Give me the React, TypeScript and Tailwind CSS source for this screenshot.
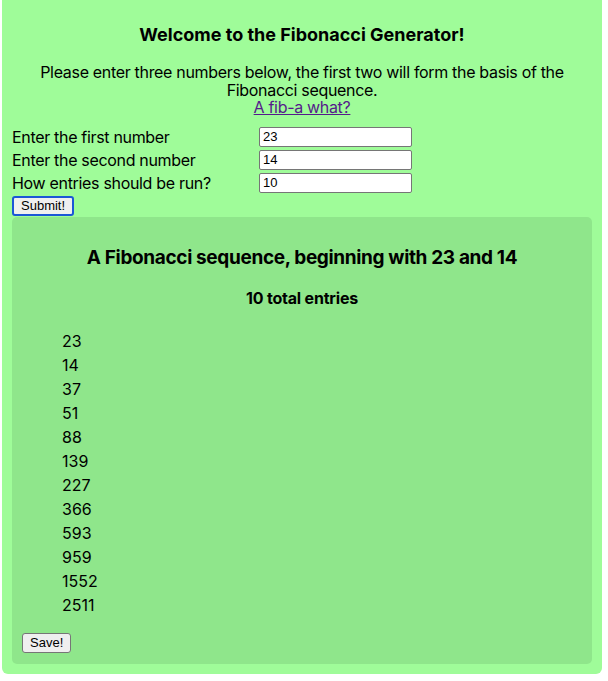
import React from "react";

const entries = [23, 14, 37, 51, 88, 139, 227, 366, 593, 959, 1552, 2511];

export default function App() {
  return (
    <div className="min-h-[681px] bg-white" style={{ fontFamily: "Inter, 'Noto Sans', sans-serif" }}>
      <div className="ml-[2px] w-[600px] rounded-b-[6px] bg-[#9ffc99] px-[10px] pb-[10px] pt-[24px] text-black">
        <h1 className="text-center text-[18px] font-bold leading-[22px]">Welcome to the Fibonacci Generator!</h1>
        <div className="mt-[18px] text-center text-[16px] leading-[17.5px] tracking-[-0.32px]">
          <p>Please enter three numbers below, the first two will form the basis of the Fibonacci sequence.</p>
          <a href="#" className="text-[#551a8b] underline">A fib-a what?</a>
        </div>
        <form className="mt-[10px] flex flex-col gap-[3px]" onSubmit={(e) => e.preventDefault()}>
          {[
            ["Enter the first number", "23"],
            ["Enter the second number", "14"],
            ["How entries should be run?", "10"],
          ].map(([label, val]) => (
            <div key={label} className="flex h-[20px] items-center">
              <label className="w-[247px] text-[16px] leading-[20px] tracking-[-0.32px]">{label}</label>
              <input
                readOnly
                value={val}
                className="h-[20px] w-[153px] rounded-[2px] border border-[#767676] bg-white px-[3px] text-[13px] leading-[18px] outline-none"
                style={{ fontFamily: "'Liberation Sans', Arial, sans-serif" }}
              />
            </div>
          ))}
          <div className="flex">
            <button
              type="submit"
              className="h-[20px] rounded-[3px] border-2 border-[#1b57d6] bg-[#efefef] px-[7px] text-[13px] leading-[14px]"
              style={{ fontFamily: "'Liberation Sans', Arial, sans-serif" }}
            >
              Submit!
            </button>
          </div>
        </form>
        <div className="mt-[1px] rounded-[5px] bg-[#8fe68b] px-[10px] pb-[11px] pt-[29px]">
          <h2 className="text-center text-[19px] font-bold leading-[24px] tracking-[-0.35px]">A Fibonacci sequence, beginning with 23 and 14</h2>
          <h3 className="mt-[18px] text-center text-[16px] font-bold leading-[20px] tracking-[-0.2px]">10 total entries</h3>
          <ul className="mt-[21px] pl-[40px]">
            {entries.map((n) => (
              <li key={n} className="text-[16px] leading-[24px]">{n}</li>
            ))}
          </ul>
          <div className="mt-[16px] flex">
            <button
              className="h-[20px] rounded-[3px] border border-[#767676] bg-[#efefef] px-[7px] text-[13px] leading-[14px]"
              style={{ fontFamily: "'Liberation Sans', Arial, sans-serif" }}
            >
              Save!
            </button>
          </div>
        </div>
      </div>
    </div>
  );
}
